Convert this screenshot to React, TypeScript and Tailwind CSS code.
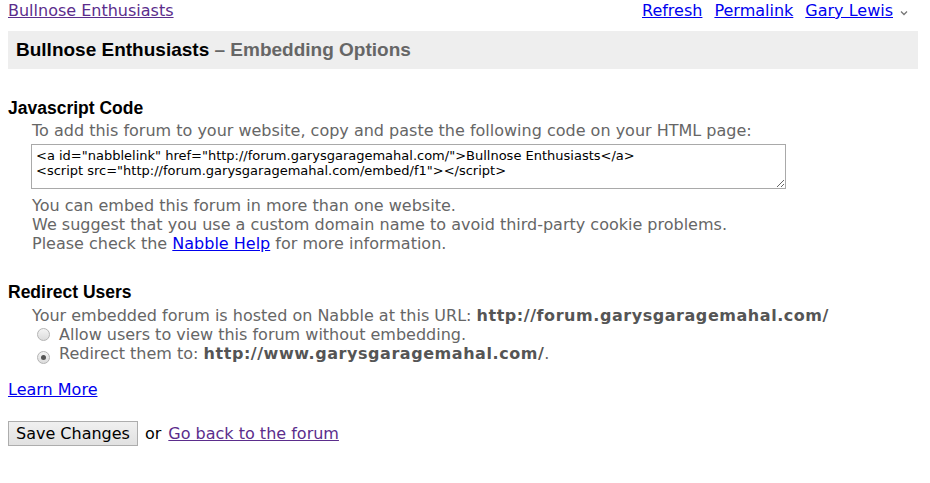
import React from "react";

const verdana = "font-['DejaVu_Sans',Verdana,sans-serif]";
const arial = "font-['Liberation_Sans',Arial,sans-serif]";

function Radio({ checked }: { checked?: boolean }) {
  return (
    <span className="inline-flex w-[13px] h-[13px] rounded-full border border-[#b4b4b4] bg-gradient-to-b from-[#f4f4f4] to-[#dcdcdc] items-center justify-center mr-[9px] align-[-1px]">
      {checked && <span className="w-[5px] h-[5px] rounded-full bg-[#555]" />}
    </span>
  );
}

export default function App() {
  return (
    <div className={`${verdana} text-[16px] bg-white min-h-[483px] text-black`}>
      <div className="flex justify-between items-center px-2 h-[22px]">
        <a href="#" className="underline text-[#5b2d8c]">
          Bullnose Enthusiasts
        </a>
        <div className="flex items-center gap-[12px] pr-[14px]">
          <a href="#" className="underline text-[#0000ee]">
            Refresh
          </a>
          <a href="#" className="underline text-[#0000ee]">
            Permalink
          </a>
          <span className="flex items-center gap-[7px]">
            <a href="#" className="underline text-[#0000ee]">
              Gary Lewis
            </a>
            <svg width="8" height="6" viewBox="0 0 8 6" className="mt-[3px]">
              <path d="M1 1.5 L4 4.5 L7 1.5" fill="none" stroke="#777" strokeWidth="1.3" />
            </svg>
          </span>
        </div>
      </div>

      <div className="ml-2 mr-[12px] mt-[9px] h-[38px] bg-[#eeeeee] flex items-center pl-2">
        <h1 className={`${arial} font-bold text-[19px]`}>
          <span className="text-black">Bullnose Enthusiasts</span>
          <span className="text-[#666]"> – Embedding Options</span>
        </h1>
      </div>

      <div className="px-2 mt-[28px]">
        <h2 className={`${arial} font-bold text-[17.5px] leading-[22px]`}>Javascript Code</h2>
        <div className="pl-6 text-[#666] leading-[19px]">
          <div className="mt-[2px]">
            To add this forum to your website, copy and paste the following code on your HTML page:
          </div>
          <textarea
            readOnly
            className="block mt-[4px] w-[755px] h-[45px] border border-[#a9a9a9] text-[13px] leading-[15px] text-black px-[4px] py-[3px] -ml-px resize-y outline-none"
            value={`<a id="nabblelink" href="http://forum.garysgaragemahal.com/">Bullnose Enthusiasts</a>\n<script src="http://forum.garysgaragemahal.com/embed/f1"></script>`}
          />
          <div className="mt-[7px]">
            <div>You can embed this forum in more than one website.</div>
            <div>We suggest that you use a custom domain name to avoid third-party cookie problems.</div>
            <div>
              Please check the{" "}
              <a href="#" className="underline text-[#0000ee]">
                Nabble Help
              </a>{" "}
              for more information.
            </div>
          </div>
        </div>

        <h2 className={`${arial} font-bold text-[17.5px] leading-[22px] mt-[28px]`}>Redirect Users</h2>
        <div className="pl-6 text-[#666] leading-[19px] mt-[3px]">
          <div>
            Your embedded forum is hosted on Nabble at this URL:{" "}
            <b className="text-[#555] tracking-[0.55px]">http://forum.garysgaragemahal.com/</b>
          </div>
          <div className="pl-[5px]">
            <Radio />
            Allow users to view this forum without embedding.
          </div>
          <div className="pl-[5px]">
            <Radio checked />
            Redirect them to:{" "}
            <b className="text-[#555] tracking-[0.55px]">http://www.garysgaragemahal.com/</b>.
          </div>
        </div>

        <div className="mt-[16px] leading-[19px]">
          <a href="#" className="underline text-[#0000ee]">
            Learn More
          </a>
        </div>

        <div className="mt-[22px] flex items-center gap-[7px]">
          <button className="h-[25px] px-[7px] border border-[#adadad] bg-gradient-to-b from-[#f0f0f0] to-[#e1e1e1] text-black leading-none">
            Save Changes
          </button>
          <span>or</span>
          <a href="#" className="underline text-[#5b2d8c]">
            Go back to the forum
          </a>
        </div>
      </div>
    </div>
  );
}
